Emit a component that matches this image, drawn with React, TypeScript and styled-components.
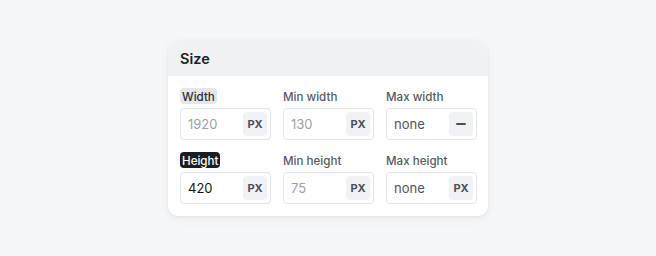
import React from "react";
import styled, { createGlobalStyle } from "styled-components";

const Global = createGlobalStyle`
  html, body { margin: 0; padding: 0; background: #f6f7f9; }
  body { font-family: Inter, "Noto Sans", sans-serif; -webkit-font-smoothing: antialiased; }
  #root { height: 100vh; }
`;

const Page = styled.div`
  height: 100%;
  display: flex;
  align-items: center;
  justify-content: center;
`;

const Card = styled.section`
  width: 320px;
  background: #ffffff;
  border-radius: 10px;
  box-shadow: 0 1px 3px rgba(16, 24, 40, 0.06), 0 4px 12px rgba(16, 24, 40, 0.04);
  overflow: hidden;
`;

const Header = styled.header`
  height: 36px;
  display: flex;
  align-items: center;
  padding: 0 12px;
  background: #eff1f4;
  font-size: 14.5px;
  font-weight: 600;
  color: #1d2025;
`;

const Grid = styled.div`
  display: grid;
  grid-template-columns: repeat(3, 91px);
  column-gap: 12px;
  row-gap: 12px;
  padding: 12px;
`;

const Field = styled.div`
  display: flex;
  flex-direction: column;
  align-items: flex-start;
  gap: 4px;
`;

const Label = styled.span<{ $variant?: "plain" | "soft" | "dark" }>`
  height: 16px;
  display: inline-flex;
  align-items: center;
  padding-top: 1px;
  box-sizing: border-box;
  font-size: 11.6px;
  font-weight: 500;
  line-height: 16px;
  border-radius: 4px;
  padding-left: ${(p) => (p.$variant && p.$variant !== "plain" ? "2px" : "0")};
  padding-right: ${(p) => (p.$variant && p.$variant !== "plain" ? "2px" : "0")};
  background: ${(p) =>
    p.$variant === "soft" ? "#e4e6ea" : p.$variant === "dark" ? "#1b1d21" : "transparent"};
  color: ${(p) =>
    p.$variant === "dark" ? "#ffffff" : p.$variant === "soft" ? "#2a2e34" : "#555b64"};
`;

const InputBox = styled.div`
  box-sizing: border-box;
  width: 100%;
  height: 32px;
  display: flex;
  align-items: center;
  justify-content: space-between;
  padding: 0 3px 0 7px;
  border: 1px solid #e3e6ea;
  border-radius: 4px;
  background: #fff;
`;

const Value = styled.span<{ $tone: "placeholder" | "filled" | "muted" }>`
  font-size: 13px;
  color: ${(p) =>
    p.$tone === "placeholder" ? "#9ba1a9" : p.$tone === "filled" ? "#15171a" : "#4f555d"};
`;

const Unit = styled.span`
  width: 24px;
  height: 24px;
  display: flex;
  align-items: center;
  justify-content: center;
  border-radius: 4px;
  background: #f0f2f5;
  font-size: 11px;
  font-weight: 700;
  color: #4a4f57;
`;

const Dash = styled.span`
  width: 10px;
  height: 2px;
  border-radius: 1px;
  background: #4a4f57;
`;

type FieldDef = {
  label: string;
  variant: "plain" | "soft" | "dark";
  value: string;
  tone: "placeholder" | "filled" | "muted";
  unit: "px" | "none";
};

const fields: FieldDef[] = [
  { label: "Width", variant: "soft", value: "1920", tone: "placeholder", unit: "px" },
  { label: "Min width", variant: "plain", value: "130", tone: "placeholder", unit: "px" },
  { label: "Max width", variant: "plain", value: "none", tone: "muted", unit: "none" },
  { label: "Height", variant: "dark", value: "420", tone: "filled", unit: "px" },
  { label: "Min height", variant: "plain", value: "75", tone: "placeholder", unit: "px" },
  { label: "Max height", variant: "plain", value: "none", tone: "muted", unit: "px" },
];

export default function App() {
  return (
    <>
      <Global />
      <Page>
        <Card>
          <Header>Size</Header>
          <Grid>
            {fields.map((f) => (
              <Field key={f.label}>
                <Label $variant={f.variant}>{f.label}</Label>
                <InputBox>
                  <Value $tone={f.tone}>{f.value}</Value>
                  <Unit>{f.unit === "px" ? "PX" : <Dash />}</Unit>
                </InputBox>
              </Field>
            ))}
          </Grid>
        </Card>
      </Page>
    </>
  );
}
